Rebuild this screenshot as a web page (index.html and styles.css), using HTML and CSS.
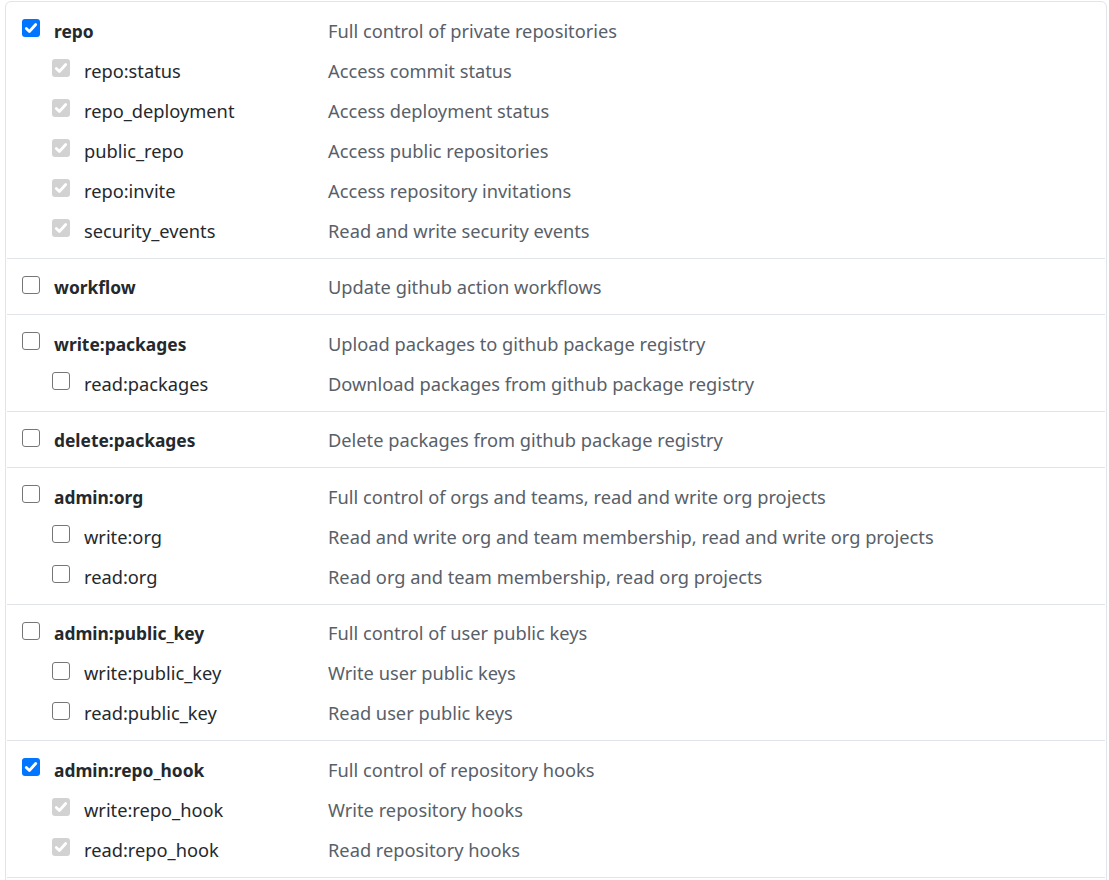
FILE: index.html
```html
<!DOCTYPE html>
<html>
<head>
<meta charset="utf-8">
<link rel="stylesheet" href="styles.css">
</head>
<body>
<div class="scopes">

  <div class="group">
    <div class="row top"><span class="cb on"><svg viewBox="0 0 18 18"><path d="M4.3 9.4l3.1 3.1 6.3-7"/></svg></span><span class="name">repo</span><span class="desc">Full control of private repositories</span></div>
    <div class="row sub"><span class="cb dis"><svg viewBox="0 0 18 18"><path d="M4.3 9.4l3.1 3.1 6.3-7"/></svg></span><span class="name">repo:status</span><span class="desc">Access commit status</span></div>
    <div class="row sub"><span class="cb dis"><svg viewBox="0 0 18 18"><path d="M4.3 9.4l3.1 3.1 6.3-7"/></svg></span><span class="name">repo_deployment</span><span class="desc">Access deployment status</span></div>
    <div class="row sub"><span class="cb dis"><svg viewBox="0 0 18 18"><path d="M4.3 9.4l3.1 3.1 6.3-7"/></svg></span><span class="name">public_repo</span><span class="desc">Access public repositories</span></div>
    <div class="row sub"><span class="cb dis"><svg viewBox="0 0 18 18"><path d="M4.3 9.4l3.1 3.1 6.3-7"/></svg></span><span class="name">repo:invite</span><span class="desc">Access repository invitations</span></div>
    <div class="row sub"><span class="cb dis"><svg viewBox="0 0 18 18"><path d="M4.3 9.4l3.1 3.1 6.3-7"/></svg></span><span class="name">security_events</span><span class="desc">Read and write security events</span></div>
  </div>

  <div class="group">
    <div class="row top"><span class="cb"></span><span class="name">workflow</span><span class="desc">Update github action workflows</span></div>
  </div>

  <div class="group">
    <div class="row top"><span class="cb"></span><span class="name">write:packages</span><span class="desc">Upload packages to github package registry</span></div>
    <div class="row sub"><span class="cb"></span><span class="name">read:packages</span><span class="desc">Download packages from github package registry</span></div>
  </div>

  <div class="group">
    <div class="row top"><span class="cb"></span><span class="name">delete:packages</span><span class="desc">Delete packages from github package registry</span></div>
  </div>

  <div class="group">
    <div class="row top"><span class="cb"></span><span class="name">admin:org</span><span class="desc">Full control of orgs and teams, read and write org projects</span></div>
    <div class="row sub"><span class="cb"></span><span class="name">write:org</span><span class="desc">Read and write org and team membership, read and write org projects</span></div>
    <div class="row sub"><span class="cb"></span><span class="name">read:org</span><span class="desc">Read org and team membership, read org projects</span></div>
  </div>

  <div class="group">
    <div class="row top"><span class="cb"></span><span class="name">admin:public_key</span><span class="desc">Full control of user public keys</span></div>
    <div class="row sub"><span class="cb"></span><span class="name">write:public_key</span><span class="desc">Write user public keys</span></div>
    <div class="row sub"><span class="cb"></span><span class="name">read:public_key</span><span class="desc">Read user public keys</span></div>
  </div>

  <div class="group">
    <div class="row top"><span class="cb on"><svg viewBox="0 0 18 18"><path d="M4.3 9.4l3.1 3.1 6.3-7"/></svg></span><span class="name">admin:repo_hook</span><span class="desc">Full control of repository hooks</span></div>
    <div class="row sub"><span class="cb dis"><svg viewBox="0 0 18 18"><path d="M4.3 9.4l3.1 3.1 6.3-7"/></svg></span><span class="name">write:repo_hook</span><span class="desc">Write repository hooks</span></div>
    <div class="row sub"><span class="cb dis"><svg viewBox="0 0 18 18"><path d="M4.3 9.4l3.1 3.1 6.3-7"/></svg></span><span class="name">read:repo_hook</span><span class="desc">Read repository hooks</span></div>
  </div>

  <div class="more"></div>

</div>
</body>
</html>
```
FILE: styles.css
```css
html, body {
  margin: 0;
  padding: 0;
  background: #ffffff;
}

body {
  font-family: "Noto Sans", "Open Sans", sans-serif;
  font-size: 18.25px;
  color: #24292e;
}

.scopes {
  margin: 1px 0 0 5px;
  width: 1100px;
  border: 1px solid #e1e4e8;
  border-radius: 6px;
}

.group {
  margin: 0 1px;
  padding: 8.75px 0 6.75px;
  border-bottom: 1px solid #e1e4e8;
}

.more {
  height: 24px;
}

.row {
  display: grid;
  grid-template-columns: 306px 1fr;
  align-items: center;
  height: 40px;
  line-height: 40px;
  white-space: nowrap;
}

.row.top { padding-left: 15px; }
.row.sub { padding-left: 45px; grid-template-columns: 276px 1fr; }

.row .cb { grid-column: 1; grid-row: 1; }
.row .name { grid-column: 1; grid-row: 1; padding-left: 32px; }
.row .desc { grid-column: 2; grid-row: 1; color: #586069; }

.top .name { font-weight: 700; font-size: 17.4px; }

.cb {
  display: block;
  box-sizing: border-box;
  width: 18px;
  height: 18px;
  margin-bottom: 5px;
  border: 1px solid #767676;
  border-radius: 3px;
  background: #ffffff;
  align-self: center;
}

.cb svg {
  display: block;
  width: 18px;
  height: 18px;
}

.cb path {
  fill: none;
  stroke: #ffffff;
  stroke-width: 2.8;
  stroke-linecap: round;
  stroke-linejoin: round;
}

.cb.on {
  border: none;
  background: #0075ff;
}

.cb.dis {
  border: none;
  background: #d2d2d2;
}
```
